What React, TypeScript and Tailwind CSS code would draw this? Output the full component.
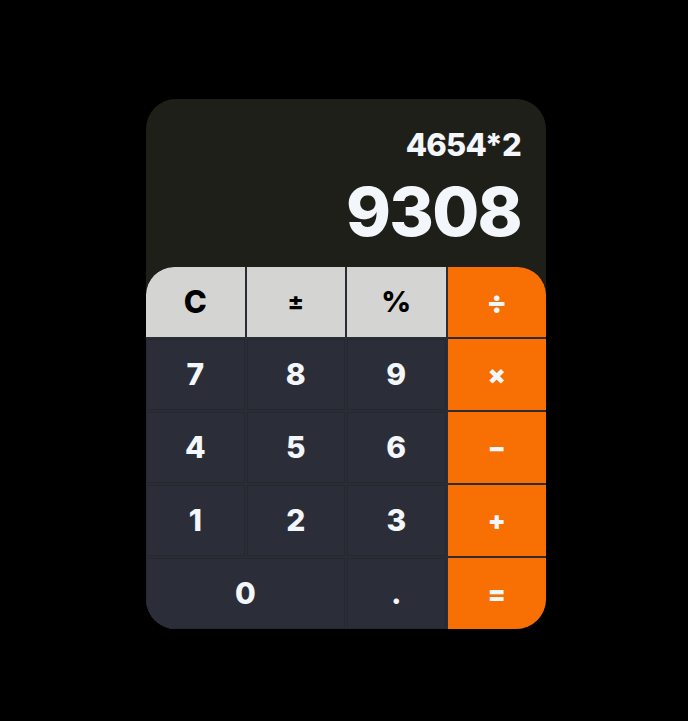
import React from 'react';

const keys = [
  { label: '7' }, { label: '8' }, { label: '9' }, { label: '×', op: true },
  { label: '4' }, { label: '5' }, { label: '6' }, { label: '−', op: true },
  { label: '1' }, { label: '2' }, { label: '3' }, { label: '+', op: true },
  { label: '0', wide: true }, { label: '.' }, { label: '=', op: true },
];

const App = () => {
  return (
    <div
      className="min-h-[721px] w-full bg-black pt-[99px] pl-[146px]"
      style={{ fontFamily: 'Inter, "Noto Sans", sans-serif' }}
    >
      <div className="w-[400px] rounded-[30px] overflow-hidden bg-[#1f1f19]">
        {/* display */}
        <div className="h-[168px] flex flex-col items-end pt-[30px] pr-[25px] text-[#f3f6fa] font-extrabold">
          <div className="text-[31px] leading-none tracking-tight">4654*2</div>
          <div className="mt-[17px] text-[68px] leading-none tracking-tight">9308</div>
        </div>

        {/* keypad */}
        <div className="grid grid-cols-4 grid-rows-[70px_71px_71px_71px_71px] gap-[2px] bg-[#2a2c36] rounded-t-[28px] overflow-hidden font-extrabold">
          <button className="bg-[#d4d4d2] text-black text-[31px] rounded-tl-[28px] flex items-center justify-center">C</button>
          <button className="bg-[#d4d4d2] text-black text-[24px] flex items-center justify-center">±</button>
          <button className="bg-[#d4d4d2] text-black text-[29px] flex items-center justify-center">%</button>
          <button className="bg-[#f86f03] text-[#f3f6fa] text-[30px] rounded-tr-[28px] flex items-center justify-center">÷</button>
          {keys.map((k, i) => (
            <button
              key={i}
              className={`flex items-center justify-center text-[#f3f6fa] ${
                k.op
                  ? 'bg-[#f86f03] text-[26px] font-black'
                  : 'bg-[#2b2e38] text-[30px] shadow-[inset_0_0_0_1px_#262830]'
              } ${k.wide ? 'col-span-2' : ''}`}
            >
              {k.label}
            </button>
          ))}
        </div>
      </div>
    </div>
  );
};

export default App;
